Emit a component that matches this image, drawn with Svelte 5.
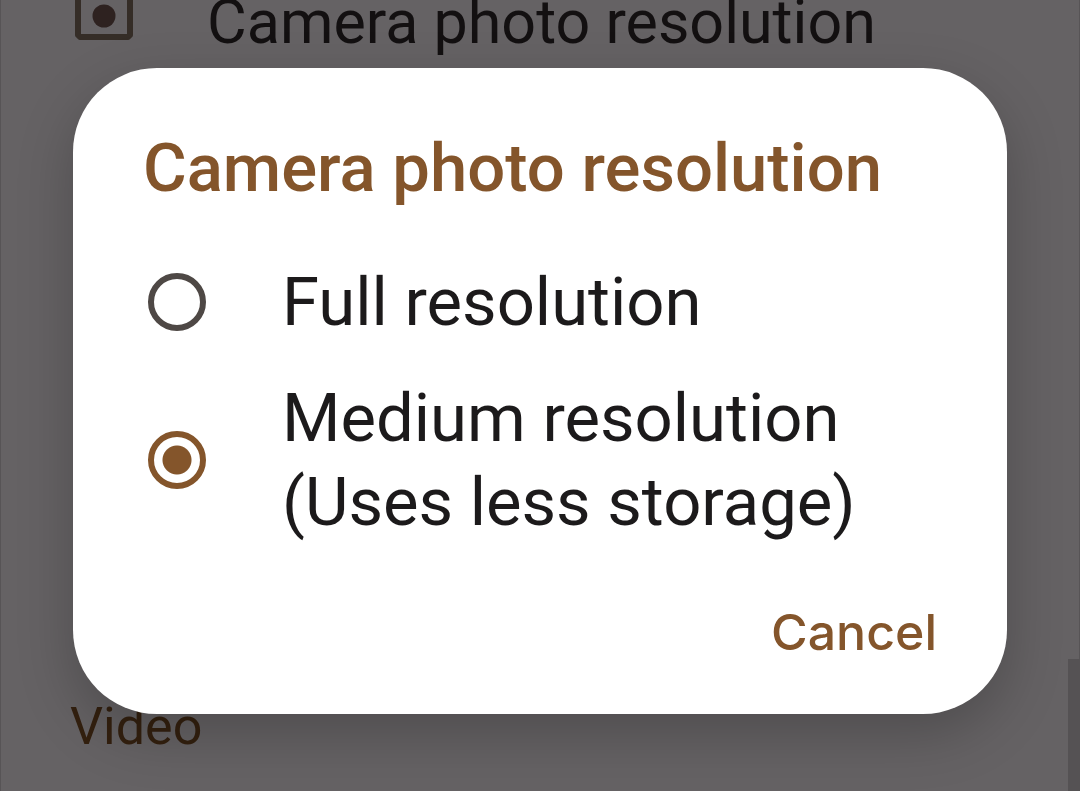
<script lang="ts">
  const options = [
    { value: 'full', label: 'Full resolution' },
    { value: 'medium', label: 'Medium resolution (Uses less storage)' }
  ];

  let selected = $state('medium');
  let open = $state(true);
</script>

<div class="screen">
  <main class="settings">
    <a class="setting" href="#resolution">
      <svg class="camera" viewBox="0 0 58 80" aria-hidden="true">
        <path d="M5 3h48l2 2v48l-2 2H5l-2-2V5z" fill="none" stroke="currentColor" stroke-width="6" stroke-linejoin="round" />
        <circle cx="29" cy="34" r="11.5" fill="#2e2220" />
      </svg>
      <span>Camera photo resolution</span>
    </a>
    <h2>Video</h2>
  </main>
  <div class="scrollbar"></div>

  {#if open}
    <div class="scrim">
      <div class="dialog" role="dialog" aria-modal="true" aria-labelledby="dialog-title">
        <h1 id="dialog-title">Camera photo resolution</h1>
        <div class="options" role="radiogroup" aria-labelledby="dialog-title">
          {#each options as option}
            <label class="option">
              <input type="radio" name="resolution" value={option.value} bind:group={selected} />
              <span>{option.label}</span>
            </label>
          {/each}
        </div>
        <div class="actions">
          <button type="button" onclick={() => (open = false)}>Cancel</button>
        </div>
      </div>
    </div>
  {/if}
</div>

<style>
  :global(body) {
    margin: 0;
    background: #656264;
  }

  .screen {
    position: relative;
    min-height: 100vh;
    overflow: hidden;
    font-family: Roboto, sans-serif;
  }

  .settings {
    display: flex;
    flex-direction: column;
    justify-content: space-between;
    box-sizing: border-box;
    min-height: 100vh;
    padding: 0 69px 32px;
    border: solid #575456;
    border-width: 0 1px;
  }

  .setting {
    display: flex;
    align-items: center;
    gap: 74px;
    height: 44px;
    padding-left: 5px;
    color: #131011;
    font-size: 61px;
    text-decoration: none;
    white-space: nowrap;
  }

  .camera {
    flex: none;
    width: 58px;
    height: 80px;
    color: #352d27;
  }

  h2 {
    margin: 0;
    color: #33200f;
    font-size: 52px;
    font-weight: 400;
    line-height: 64px;
  }

  .scrollbar {
    position: absolute;
    right: 0;
    bottom: 0;
    width: 12px;
    height: 132px;
    background: #555254;
  }

  .scrim {
    position: absolute;
    inset: 0;
    padding: 68px 73px;
  }

  .dialog {
    padding: 64px 70px 50px;
    border-radius: 84px;
    background: #fff;
    box-shadow: 0 20px 56px rgba(0, 0, 0, 0.22);
  }

  h1 {
    margin: 0 0 40px;
    color: #84552b;
    font-size: 67px;
    font-weight: 500;
    line-height: 72px;
  }

  .option {
    display: flex;
    align-items: center;
    gap: 76px;
    padding: 16px 0;
    color: #1c1a1b;
    font-size: 67px;
    line-height: 84px;
  }

  input {
    appearance: none;
    box-sizing: border-box;
    flex: none;
    width: 58px;
    height: 58px;
    margin: 0 0 0 5px;
    border: 6px solid #4e4845;
    border-radius: 50%;
  }

  input:checked {
    border-color: #84552b;
    background: radial-gradient(circle, #84552b 14px, transparent 15px);
  }

  .actions {
    display: flex;
    justify-content: flex-end;
    margin-top: 40px;
  }

  button {
    padding: 0;
    border: 0;
    background: none;
    color: #84552b;
    font: 500 50px/64px Inter, sans-serif;
  }
</style>
